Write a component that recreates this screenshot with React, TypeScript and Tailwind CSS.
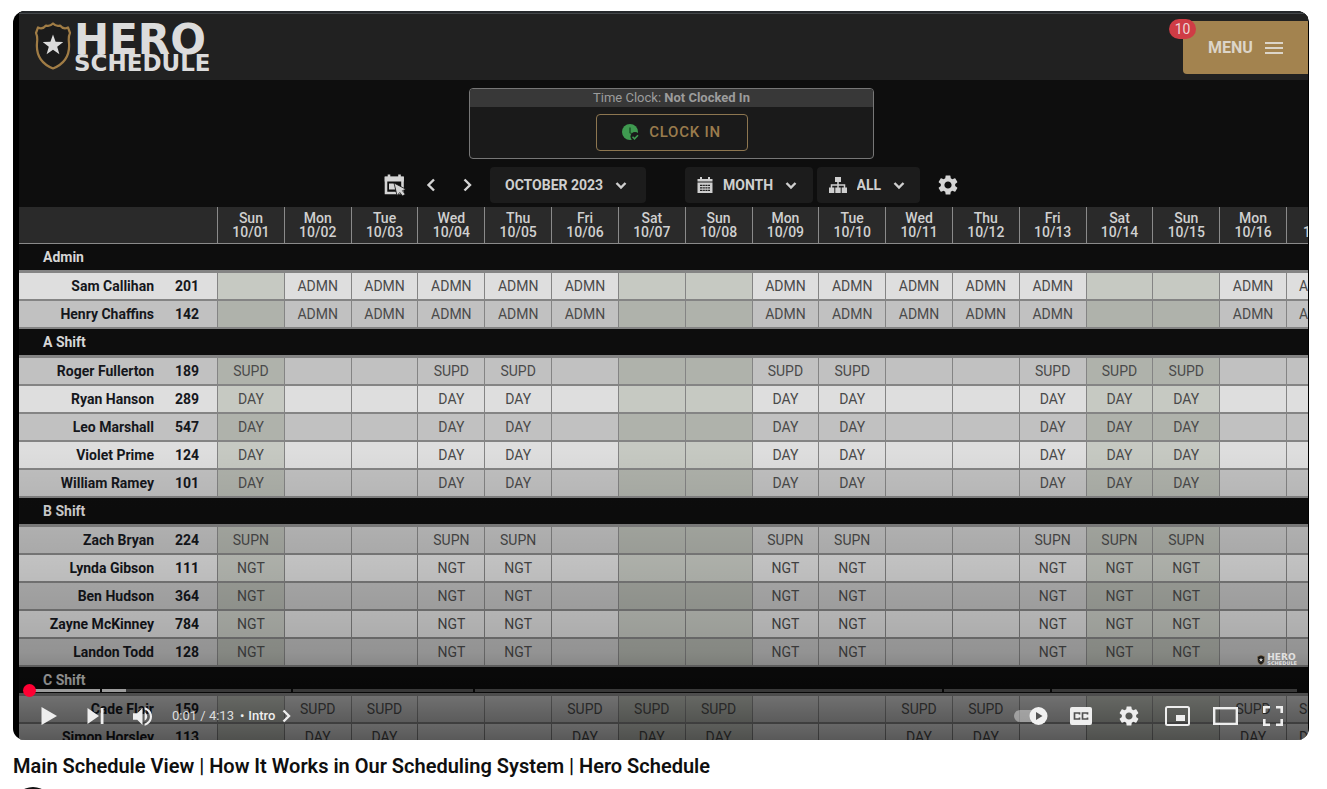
import React from "react";
import { MdSettings } from "react-icons/md";

type Row = { name: string; id: string; code: string };
type Group = { title: string; days: number[]; rows: Row[] };

const weekdays = ["Sun", "Mon", "Tue", "Wed", "Thu", "Fri", "Sat"];
const dayNumbers = Array.from({ length: 17 }, (_, i) => i + 1);
const isWeekend = (day: number) => day % 7 === 1 || day % 7 === 0;

const groups: Group[] = [
  {
    title: "Admin",
    days: [2, 3, 4, 5, 6, 9, 10, 11, 12, 13, 16, 17],
    rows: [
      { name: "Sam Callihan", id: "201", code: "ADMN" },
      { name: "Henry Chaffins", id: "142", code: "ADMN" },
    ],
  },
  {
    title: "A Shift",
    days: [1, 4, 5, 9, 10, 13, 14, 15],
    rows: [
      { name: "Roger Fullerton", id: "189", code: "SUPD" },
      { name: "Ryan Hanson", id: "289", code: "DAY" },
      { name: "Leo Marshall", id: "547", code: "DAY" },
      { name: "Violet Prime", id: "124", code: "DAY" },
      { name: "William Ramey", id: "101", code: "DAY" },
    ],
  },
  {
    title: "B Shift",
    days: [1, 4, 5, 9, 10, 13, 14, 15],
    rows: [
      { name: "Zach Bryan", id: "224", code: "SUPN" },
      { name: "Lynda Gibson", id: "111", code: "NGT" },
      { name: "Ben Hudson", id: "364", code: "NGT" },
      { name: "Zayne McKinney", id: "784", code: "NGT" },
      { name: "Landon Todd", id: "128", code: "NGT" },
    ],
  },
  {
    title: "C Shift",
    days: [2, 3, 6, 7, 8, 11, 12, 16, 17],
    rows: [
      { name: "Cade Flair", id: "159", code: "SUPD" },
      { name: "Simon Horsley", id: "113", code: "DAY" },
    ],
  },
];

function cellColor(light: boolean, weekend: boolean) {
  if (weekend) return light ? "bg-[#c6c9c2]" : "bg-[#afb2ab]";
  return light ? "bg-[#dedede]" : "bg-[#c1c1c1]";
}

function Shield({ className }: { className: string }) {
  return (
    <svg viewBox="0 0 38 48" className={className} aria-hidden="true">
      <path
        d="M4 5.5C7 7 10 6 12 3.5C14.500 4.500 17 3.500 19 1.500C21 3.500 23.500 4.500 26 3.500C28 6 31 7 34 5.500L36 11C34.500 14 34.500 17 35 21C36 33 30 42 19 46.500C8 42 2 33 3 21C3.500 17 3.500 14 2 11Z"
        fill="#1b1b1b"
        stroke="#a07c45"
        strokeWidth="2.200"
        strokeLinejoin="round"
      />
      <path
        d="M19 12.500L21.600 19.800L29.300 20L23.200 24.700L25.400 32.200L19 27.800L12.600 32.200L14.800 24.700L8.700 20L16.400 19.800Z"
        fill="#dcdcdc"
      />
    </svg>
  );
}

function Chevron({ dir, className }: { dir: "left" | "right" | "down"; className: string }) {
  const d = { left: "M12 3.500L6.500 9L12 14.500", right: "M6.500 3.500L12 9L6.500 14.500", down: "M4.500 7L9 11.500L13.500 7" }[dir];
  return (
    <svg viewBox="0 0 18 18" className={className} fill="none" stroke="currentColor" strokeWidth="2.400" aria-hidden="true">
      <path d={d} />
    </svg>
  );
}

function Picker({ label, value, icon, className }: { label: string; value: string; icon?: React.ReactNode; className: string }) {
  return (
    <label className={`flex h-9 items-center justify-center rounded bg-[#1c1c1c] text-[#cfcfcf] ${className}`}>
      {icon}
      <select aria-label={label} className="appearance-none bg-transparent text-sm font-bold outline-none">
        <option>{value}</option>
      </select>
      <Chevron dir="down" className="ml-2 size-[18px] shrink-0" />
    </label>
  );
}

function TopBar() {
  return (
    <header className="flex h-[66px] items-start justify-between bg-[#212121]">
      <a href="#home" aria-label="Hero Schedule" className="ml-[15px] mt-2 flex items-start">
        <Shield className="h-12 w-[38px]" />
        <span className="ml-0.5 mt-0.5 flex flex-col font-['DejaVu_Sans'] font-bold text-[#dcdcdc]">
          <span className="text-[42px] leading-[32px]">HERO</span>
          <span className="text-[23px] leading-[15px]">SCHEDULE</span>
        </span>
      </a>
      <button className="relative mt-[7px] flex h-[53px] w-[125px] items-center gap-3 rounded-l bg-[#a3834f] pl-[25px] text-base font-bold text-[#dcd5c9]">
        MENU
        <svg viewBox="0 0 18 14" className="h-3.5 w-[18px]" stroke="currentColor" strokeWidth="2" aria-hidden="true">
          <path d="M0 2H18M0 7H18M0 12H18" />
        </svg>
        <span className="absolute -left-3.5 -top-0.5 flex h-5 w-[27px] items-center justify-center rounded-full bg-[#cf3c45] text-sm font-normal text-[#ecd5d5]">
          10
        </span>
      </button>
    </header>
  );
}

function TimeClock() {
  return (
    <section className="h-[71px] w-[405px] overflow-hidden rounded border border-[#777] bg-[#1a1a1a]">
      <p className="bg-[#383838] text-center text-[13px] leading-[18px] text-[#9c9c9c]">
        Time Clock: <b>Not Clocked In</b>
      </p>
      <button className="mx-auto mt-[7px] flex h-[37px] w-[152px] items-center justify-center gap-2.5 rounded border border-[#8d7650] text-[15px] font-medium tracking-wider text-[#9a7c4d]">
        <svg viewBox="0 0 17 17" className="size-[17px]" aria-hidden="true">
          <circle cx="8" cy="8" r="8" fill="#3f9a50" />
          <path d="M8 3.500V8.500L10.500 10.500" fill="none" stroke="#1d5a2a" strokeWidth="1.600" />
          <circle cx="13" cy="12.500" r="4.500" fill="#1a1a1a" />
          <path d="M10.500 12.800L12.500 14.800L16 11.300" fill="none" stroke="#3f9a50" strokeWidth="1.600" />
        </svg>
        CLOCK IN
      </button>
    </section>
  );
}

function Toolbar() {
  return (
    <div className="mt-2 flex h-9 items-center text-[#d4d4d4]">
      <button aria-label="Go to today">
        <svg viewBox="0 0 22 22" className="size-[22px]" aria-hidden="true">
          <path d="M5 0.500V4M15.500 0.500V4" stroke="currentColor" strokeWidth="2.600" />
          <path d="M2 4H18.500V19H2Z" fill="none" stroke="currentColor" strokeWidth="2.600" />
          <path d="M0.700 2.500H19.800V7.500H0.700Z M5 9.500H11V15.500H5Z" fill="currentColor" />
          <path
            d="M10 9L22 15.300L18.500 16.700L21.300 20.300L18.500 22L15.800 18.500L13 21.500Z"
            fill="currentColor"
            stroke="#0f0f0f"
            strokeWidth="0.800"
          />
        </svg>
      </button>
      <button aria-label="Previous month" className="ml-4">
        <Chevron dir="left" className="size-[18px]" />
      </button>
      <button aria-label="Next month" className="ml-[18px] mr-3.5">
        <Chevron dir="right" className="size-[18px]" />
      </button>
      <Picker label="Month shown" value="OCTOBER 2023" className="mr-[39px] w-[156px]" />
      <Picker
        label="View"
        value="MONTH"
        className="mr-1 w-32"
        icon={
          <svg viewBox="0 0 16 16" className="mr-2.5 size-4 shrink-0" aria-hidden="true">
            <path d="M3 0H5V2H11V0H13V2H15.500V4.500H0.500V2H3Z M0.500 5.500H15.500V16H0.500Z" fill="currentColor" />
            <path d="M3 8.300H13M3 10.800H13M3 13.300H13" stroke="#1c1c1c" strokeWidth="1.200" />
            <path d="M5.700 7V14.500M8.200 7V14.500M10.700 7V14.500" stroke="currentColor" strokeWidth="0.600" />
          </svg>
        }
      />
      <Picker
        label="Groups"
        value="ALL"
        className="mr-4 w-[103px]"
        icon={
          <svg viewBox="0 0 18 16" className="mr-2.5 h-4 w-[18px] shrink-0" aria-hidden="true">
            <path d="M6 0H12V5H6Z M0 10.500H5.300V16H0Z M6.300 10.500H11.700V16H6.300Z M12.700 10.500H18V16H12.700Z" fill="currentColor" />
            <path d="M9 5V11M2.500 11V8H15.500V11" fill="none" stroke="currentColor" strokeWidth="1.500" />
          </svg>
        }
      />
      <button aria-label="Schedule settings">
        <MdSettings className="size-6" />
      </button>
    </div>
  );
}

function ScheduleTable() {
  let line = -1;
  return (
    <table className="mt-1 w-full table-fixed border-separate border-spacing-0 text-sm leading-[14px]">
      <colgroup>
        <col className="w-[198px]" />
        {dayNumbers.map((d) => (
          <col key={d} className={d === 17 ? "w-[22px]" : ""} />
        ))}
      </colgroup>
      <thead>
        <tr className="h-[37px] bg-[#2a2a2a] text-[#d0d0d0]">
          <td className="border-b border-[#8a8a8a]" />
          {dayNumbers.map((d) => (
            <th key={d} scope="col" className="overflow-hidden border-b border-l border-[#8a8a8a] p-0 font-medium">
              <span className={d === 17 ? "ml-4 block w-9 pt-3.5 text-left" : ""}>
                {d < 17 && (
                  <>
                    {weekdays[(d - 1) % 7]}
                    <br />
                  </>
                )}
                10/{String(d).padStart(2, "0")}
              </span>
            </th>
          ))}
        </tr>
      </thead>
      <tbody>
        {groups.map((group) => {
          line++;
          return (
            <React.Fragment key={group.title}>
              <tr className="h-[29px] bg-[#0d0d0d] text-[#d6d6d6]">
                <th colSpan={18} scope="colgroup" className="border-b-3 border-[#848484] p-0 pl-6 text-left font-bold">
                  {group.title}
                </th>
              </tr>
              {group.rows.map((row) => {
                line++;
                const light = line % 2 === 1;
                return (
                  <tr key={row.name} className="h-7 text-[#4a4a4a]">
                    <th
                      scope="row"
                      className={`border-b-2 border-[#848484] p-0 font-bold text-[#15171c] ${cellColor(light, false)}`}
                    >
                      <span className="flex">
                        <span className="w-[135px] text-right">{row.name}</span>
                        <span className="ml-[21px]">{row.id}</span>
                      </span>
                    </th>
                    {dayNumbers.map((d) => (
                      <td
                        key={d}
                        className={`overflow-hidden border-b-2 border-l border-[#848484] p-0 ${
                          d === 17 ? "pl-3 text-left" : "text-center"
                        } ${cellColor(light, isWeekend(d))}`}
                      >
                        {group.days.includes(d) ? row.code : ""}
                      </td>
                    ))}
                  </tr>
                );
              })}
            </React.Fragment>
          );
        })}
      </tbody>
    </table>
  );
}

const chapters = [
  { size: "grow-[75]", loaded: "w-full" },
  { size: "grow-[189]", loaded: "w-[13%]" },
  { size: "grow-[180]", loaded: "w-0" },
  { size: "grow-[468]", loaded: "w-0" },
  { size: "grow-[106]", loaded: "w-0" },
  { size: "grow-[245]", loaded: "w-0" },
];

function ControlButton({ label, className, children }: { label: string; className: string; children: React.ReactNode }) {
  return (
    <button aria-label={label} className={`flex h-12 items-center justify-center ${className}`}>
      {children}
    </button>
  );
}

function PlayerControls() {
  return (
    <div className="absolute inset-x-3 bottom-0 text-[#eee]">
      <div className="relative flex h-[3px] gap-0.5">
        {chapters.map((c, i) => (
          <div key={i} className={`basis-0 bg-white/20 ${c.size}`}>
            <div className={`h-full bg-white/50 ${c.loaded}`} />
          </div>
        ))}
        <span className="absolute -left-0.5 -top-[5px] size-[13px] rounded-full bg-[#ff0033]" />
        <input type="range" aria-label="Seek" min={0} max={253} defaultValue={1} className="absolute inset-x-0 -top-1 h-3 w-full opacity-0" />
      </div>
      <div className="flex h-12 items-center">
        <ControlButton label="Play" className="w-[47px]">
          <svg viewBox="0 0 16 18" className="h-[18px] w-4" fill="currentColor">
            <path d="M0.500 0L16 9L0.500 18Z" />
          </svg>
        </ControlButton>
        <ControlButton label="Next" className="w-[47px]">
          <svg viewBox="0 0 17 16" className="h-4 w-[17px]" fill="currentColor">
            <path d="M0.500 0L12 8L0.500 16Z M13.700 0H16.500V16H13.700Z" />
          </svg>
        </ControlButton>
        <ControlButton label="Mute" className="w-[47px]">
          <svg viewBox="8 9 18 18" className="size-[19px]" fill="currentColor">
            <path d="M8 21L12 21L17 26L17 10L12 15L8 15Z M19 14L19 22C20.480 21.320 21.500 19.770 21.500 18C21.500 16.260 20.480 14.740 19 14Z M19 11.290C21.890 12.150 24 14.830 24 18C24 21.170 21.890 23.850 19 24.710L19 26.770C23.010 25.860 26 22.280 26 18C26 13.720 23.010 10.140 19 9.230Z" />
          </svg>
        </ControlButton>
        <span className="ml-1.5 text-[13px] text-[#ddd]">0:01 / 4:13</span>
        <button className="ml-1.5 flex items-center text-[13px]">
          <span className="mr-1">•</span>
          <span className="font-medium">Intro</span>
          <Chevron dir="right" className="ml-0.5 size-[18px]" />
        </button>
        <div className="ml-auto flex">
          <ControlButton label="Autoplay" className="w-12 pr-1">
            <svg viewBox="0 0 34 18" className="h-[18px] w-[34px]">
              <rect x="0" y="3" width="30" height="12" rx="6" fill="#fff" fillOpacity="0.4" />
              <circle cx="24.500" cy="9" r="9" fill="#f1f1f1" />
              <path d="M22 5L28.500 9L22 13Z" fill="#555" />
            </svg>
          </ControlButton>
          <ControlButton label="Subtitles" className="w-12">
            <svg viewBox="0 0 22 18" className="h-[18px] w-[22px]">
              <rect width="22" height="18" rx="2" fill="currentColor" />
              <path d="M9.500 7.500V6H4.500V12H9.500V10.500M17.500 7.500V6H12.500V12H17.500V10.500" fill="none" stroke="#505050" strokeWidth="1.700" />
            </svg>
          </ControlButton>
          <ControlButton label="Settings" className="w-12">
            <MdSettings className="size-6" />
          </ControlButton>
          <ControlButton label="Miniplayer" className="w-12">
            <svg viewBox="0 0 25 20" className="h-5 w-[25px]">
              <rect x="1" y="1" width="23" height="18" rx="1.500" fill="none" stroke="currentColor" strokeWidth="2" />
              <rect x="11" y="9" width="9" height="6" fill="currentColor" />
            </svg>
          </ControlButton>
          <ControlButton label="Theater mode" className="w-12">
            <svg viewBox="0 0 25 18" className="h-[18px] w-[25px]">
              <rect x="1.200" y="1.200" width="22.600" height="15.600" fill="none" stroke="currentColor" strokeWidth="2.400" />
            </svg>
          </ControlButton>
          <ControlButton label="Full screen" className="w-12">
            <svg viewBox="0 0 20 20" className="size-5" fill="none" stroke="currentColor" strokeWidth="2.600">
              <path d="M1.300 7V1.300H7M13 1.300H18.700V7M18.700 13V18.700H13M7 18.700H1.300V13" />
            </svg>
          </ControlButton>
        </div>
      </div>
    </div>
  );
}

export default function App() {
  return (
    <main className="h-screen overflow-hidden bg-white pl-[13px] pr-[18px] pt-[11px] font-[Roboto,sans-serif]">
      <div className="relative aspect-video overflow-hidden rounded-xl bg-black pl-1.5 pr-px">
        <div className="bg-[#0e0e0e]">
          <div className="h-[3px] border-b border-[#44474a] bg-[#25282b]" />
          <TopBar />
          <div className="flex flex-col items-center pl-4 pt-2">
            <TimeClock />
            <Toolbar />
          </div>
          <ScheduleTable />
        </div>
        <div className="pointer-events-none absolute inset-x-0 bottom-0 h-2/5 bg-linear-to-b from-transparent via-black/24 via-70% to-black/60" />
        <div className="absolute bottom-[75px] right-3 flex items-center gap-0.5 text-[#e0e0e0]">
          <Shield className="h-2.5 w-2" />
          <span className="flex flex-col font-['DejaVu_Sans'] font-bold">
            <span className="text-[9px] leading-[7px]">HERO</span>
            <span className="text-[5px] leading-[4px]">SCHEDULE</span>
          </span>
        </div>
        <PlayerControls />
      </div>
      <h1 className="mt-3 text-xl leading-7 font-semibold text-[#0f0f0f]">
        Main Schedule View | How It Works in Our Scheduling System | Hero Schedule
      </h1>
      <div className="mt-[7px] size-10 rounded-full bg-[#111]" />
    </main>
  );
}
